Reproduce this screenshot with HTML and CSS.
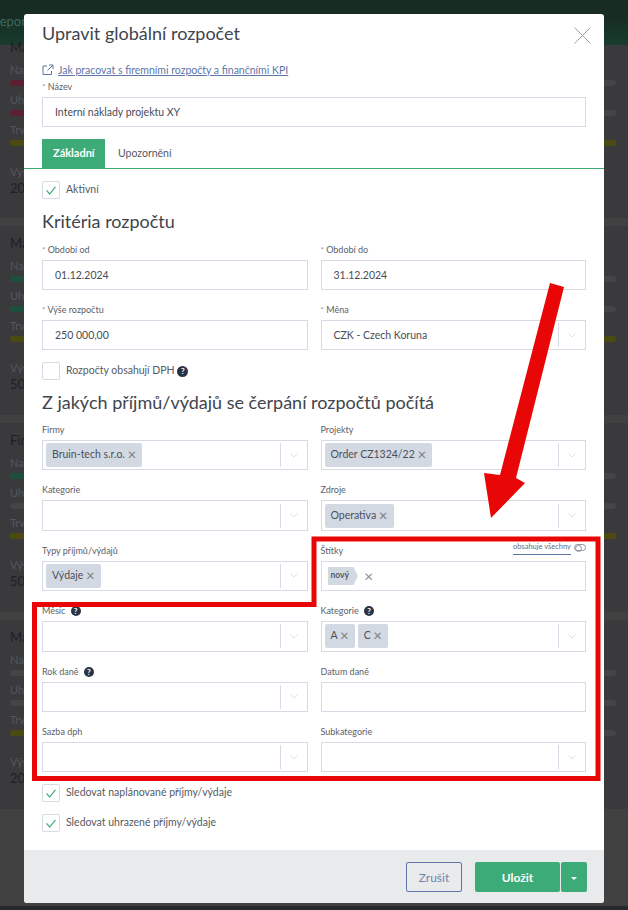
FILE: index.html
```html
<!DOCTYPE html>
<html lang="cs">
<head>
  <meta charset="UTF-8" />
  <meta name="viewport" content="width=device-width, initial-scale=1.0"/>
  <title>Upravit globální rozpočet</title>
  <link rel="stylesheet" href="styles.css">
</head>
<body>
  <!-- stranka za modalem -->
  <div class="page">
    <div class="topbar">Reporty</div>
    <div class="card first">
      <div class="card-title">Marže</div>
      <div class="metric">Naplánované</div>
      <div class="bar"><span class="fill red"></span></div>
      <div class="metric">Uhrazené</div>
      <div class="bar"><span class="fill red"></span></div>
      <div class="metric">Trvání</div>
      <div class="bar"><span class="fill olive full"></span></div>
      <div class="metric gap">Výše</div>
      <div class="amount">200 000</div>
    </div>
    <div class="card">
      <div class="card-title">Marže</div>
      <div class="metric">Naplánované</div>
      <div class="bar"><span class="fill green"></span></div>
      <div class="metric">Uhrazené</div>
      <div class="bar"><span class="fill green"></span></div>
      <div class="metric">Trvání</div>
      <div class="bar"><span class="fill olive full"></span></div>
      <div class="metric gap">Výše</div>
      <div class="amount">500 000</div>
    </div>
    <div class="card">
      <div class="card-title">Finance</div>
      <div class="metric">Naplánované</div>
      <div class="bar"><span class="fill green"></span></div>
      <div class="metric">Uhrazené</div>
      <div class="bar"></div>
      <div class="metric">Trvání</div>
      <div class="bar"><span class="fill olive full"></span></div>
      <div class="metric gap">Výše</div>
      <div class="amount">500 000</div>
    </div>
    <div class="card">
      <div class="card-title">Marže</div>
      <div class="metric">Naplánované</div>
      <div class="bar"></div>
      <div class="metric">Uhrazené</div>
      <div class="bar"></div>
      <div class="metric">Trvání</div>
      <div class="bar"><span class="fill olive"></span></div>
      <div class="metric gap">Výše</div>
      <div class="amount">200 000</div>
    </div>
  </div>

  <div class="modal">
    <div class="modal-body">
      <div class="modal-head">
        <h2 class="title">Upravit globální rozpočet</h2>
        <svg class="close" viewBox="0 0 17 17"><path d="M.5.5l16 16M16.500.5l-16 16"/></svg>
      </div>

      <a class="help-link" href="#">
        <svg viewBox="0 0 12 12"><path d="M9.500 7v3.500h-8.500v-8.500h4M7 1h4v4M11 1L5.500 6.500"/></svg>
        <span>Jak pracovat s firemními rozpočty a finančními KPI</span>
      </a>

      <div class="field">
        <label><i>*</i> Název</label>
        <div class="control"><span class="value">Interní náklady projektu XY</span></div>
      </div>

      <div class="tabs">
        <div class="tab active">Základní</div>
        <div class="tab">Upozornění</div>
      </div>

      <div class="check first-check">
        <span class="box"><svg viewBox="0 0 18 18"><path d="M4 9.500l3.500 4 6.500-8"/></svg></span>
        Aktivní
      </div>

      <h3 class="section first-section">Kritéria rozpočtu</h3>

      <div class="form-grid">
        <div class="field">
          <label><i>*</i> Období od</label>
          <div class="control"><span class="value">01.12.2024</span></div>
        </div>
        <div class="field">
          <label><i>*</i> Období do</label>
          <div class="control"><span class="value">31.12.2024</span></div>
        </div>
        <div class="field">
          <label><i>*</i> Výše rozpočtu</label>
          <div class="control"><span class="value">250 000,00</span></div>
        </div>
        <div class="field">
          <label><i>*</i> Měna</label>
          <div class="control select">
            <span class="value">CZK - Czech Koruna</span>
            <span class="arrow"><svg viewBox="0 0 8 5"><path d="M.5.500l3.500 3.500 3.500-3.500"/></svg></span>
          </div>
        </div>
      </div>

      <div class="check dph-check">
        <span class="box"></span>
        <span>Rozpočty obsahují DPH <span class="hint">?</span></span>
      </div>

      <h3 class="section second-section">Z jakých příjmů/výdajů se čerpání rozpočtů počítá</h3>

      <div class="form-grid tight">
        <div class="field">
          <label>Firmy</label>
          <div class="control select">
            <span class="chips"><span class="chip">Bruin-tech s.r.o. <b>×</b></span></span>
            <span class="arrow"><svg viewBox="0 0 8 5"><path d="M.5.500l3.500 3.500 3.500-3.500"/></svg></span>
          </div>
        </div>
        <div class="field">
          <label>Projekty</label>
          <div class="control select">
            <span class="chips"><span class="chip">Order CZ1324/22 <b>×</b></span></span>
            <span class="arrow"><svg viewBox="0 0 8 5"><path d="M.5.500l3.500 3.500 3.500-3.500"/></svg></span>
          </div>
        </div>
        <div class="field">
          <label>Kategorie</label>
          <div class="control select">
            <span class="chips"></span>
            <span class="arrow"><svg viewBox="0 0 8 5"><path d="M.5.500l3.500 3.500 3.500-3.500"/></svg></span>
          </div>
        </div>
        <div class="field">
          <label>Zdroje</label>
          <div class="control select">
            <span class="chips"><span class="chip">Operativa <b>×</b></span></span>
            <span class="arrow"><svg viewBox="0 0 8 5"><path d="M.5.500l3.500 3.500 3.500-3.500"/></svg></span>
          </div>
        </div>
        <div class="field">
          <label>Typy příjmů/výdajů</label>
          <div class="control select">
            <span class="chips"><span class="chip">Výdaje <b>×</b></span></span>
            <span class="arrow"><svg viewBox="0 0 8 5"><path d="M.5.500l3.500 3.500 3.500-3.500"/></svg></span>
          </div>
        </div>
        <div class="field">
          <label class="label-split">
            Štítky
            <span class="match-all"><u>obsahuje všechny</u><span class="toggle"></span></span>
          </label>
          <div class="control tags">
            <span class="tag">nový</span>
            <b class="tag-x">×</b>
          </div>
        </div>
        <div class="field">
          <label>Měsíc <span class="hint">?</span></label>
          <div class="control select">
            <span class="chips"></span>
            <span class="arrow"><svg viewBox="0 0 8 5"><path d="M.5.500l3.500 3.500 3.500-3.500"/></svg></span>
          </div>
        </div>
        <div class="field">
          <label>Kategorie <span class="hint">?</span></label>
          <div class="control select">
            <span class="chips">
              <span class="chip">A <b>×</b></span>
              <span class="chip">C <b>×</b></span>
            </span>
            <span class="arrow"><svg viewBox="0 0 8 5"><path d="M.5.500l3.500 3.500 3.500-3.500"/></svg></span>
          </div>
        </div>
        <div class="field">
          <label>Rok daně <span class="hint">?</span></label>
          <div class="control select">
            <span class="chips"></span>
            <span class="arrow"><svg viewBox="0 0 8 5"><path d="M.5.500l3.500 3.500 3.500-3.500"/></svg></span>
          </div>
        </div>
        <div class="field">
          <label>Datum daně</label>
          <div class="control"></div>
        </div>
        <div class="field">
          <label>Sazba dph</label>
          <div class="control select">
            <span class="chips"></span>
            <span class="arrow"><svg viewBox="0 0 8 5"><path d="M.5.500l3.500 3.500 3.500-3.500"/></svg></span>
          </div>
        </div>
        <div class="field">
          <label>Subkategorie</label>
          <div class="control select">
            <span class="chips"></span>
            <span class="arrow"><svg viewBox="0 0 8 5"><path d="M.5.500l3.500 3.500 3.500-3.500"/></svg></span>
          </div>
        </div>
      </div>

      <div class="check first-check">
        <span class="box"><svg viewBox="0 0 18 18"><path d="M4 9.500l3.500 4 6.500-8"/></svg></span>
        Sledovat naplánované příjmy/výdaje
      </div>
      <div class="check first-check">
        <span class="box"><svg viewBox="0 0 18 18"><path d="M4 9.500l3.500 4 6.500-8"/></svg></span>
        Sledovat uhrazené příjmy/výdaje
      </div>
    </div>

    <div class="modal-foot">
      <button class="btn-cancel">Zrušit</button>
      <div class="btn-group">
        <button class="btn-save">Uložit</button>
        <button class="btn-caret"><span></span></button>
      </div>
    </div>
  </div>

  <!-- cervene oznaceni pres screenshot -->
  <svg class="markup" viewBox="0 0 628 910">
    <path class="markup-frame" d="M314 539H598V778.500H34.500V604.500H314Z"/>
    <path class="markup-arrow" d="M550 283L564 287L516 478L525 483L491 518L484 473L500 475Z"/>
  </svg>
</body>
</html>
```

FILE: styles.css
```css
* {
  box-sizing: border-box;
}

body {
  margin: 0;
  height: 910px;
  overflow: hidden;
  position: relative;
  font-family: 'Lato', sans-serif;
  background: #26292c;
  color: #4a4e57;
}

/* stranka v pozadi */
.page {
  height: 906px;
  overflow: hidden;
  display: flex;
  flex-direction: column;
  gap: 8px;
  background: #414142;
}

.topbar {
  flex: none;
  height: 45px;
  margin-bottom: -8px;
  padding: 13px 0 0 0;
  margin-left: -8px;
  background: linear-gradient(#172d24 0, #172d24 40%, #183c2e 100%);
  color: #3b6a58;
  font-size: 13px;
  white-space: nowrap;
}

.card {
  flex: none;
  height: 189px;
  padding: 8px 12px 0 10px;
  background: #3a3a3c;
}

.card.first {
  height: 173px;
  padding-top: 0;
}

.card.first .card-title {
  margin-top: -7px;
}

.card-title {
  height: 18px;
  font-size: 13px;
  line-height: 18px;
  color: #1e2026;
}

.metric {
  margin-top: 8px;
  height: 12px;
  font-size: 11px;
  line-height: 12px;
  color: #55565c;
}

.metric.gap {
  margin-top: 20px;
}

.amount {
  margin-top: 3px;
  font-size: 13px;
  line-height: 14px;
  color: #1f2126;
}

.bar {
  height: 6px;
  margin-top: 4px;
  border-radius: 3px;
  background: #454547;
}

.fill {
  display: block;
  width: 60px;
  height: 6px;
  border-radius: 3px;
}

.fill.full {
  width: 100%;
}

.fill.red { background: #5c2030; }
.fill.green { background: #1e4f3c; }
.fill.olive { background: #4b4a10; }

/* modal */
.modal {
  position: absolute;
  top: 14px;
  left: 24px;
  width: 580px;
  height: 889px;
  display: flex;
  flex-direction: column;
  background: #fff;
  border-radius: 3px;
  overflow: hidden;
}

.modal-body {
  flex: 1;
  padding: 8px 18px 0;
}

.modal-head {
  display: flex;
  justify-content: space-between;
  height: 24px;
}

.title {
  margin: -1px 0 0;
  font-size: 18px;
  font-weight: 400;
  line-height: 24px;
  color: #41454c;
}

.close {
  width: 17px;
  height: 17px;
  margin: 5px -5px 0 0;
  fill: none;
  stroke: #9a9ea6;
  stroke-width: 1;
}

.help-link {
  display: flex;
  align-items: center;
  gap: 4px;
  height: 15px;
  margin-top: 16px;
  font-size: 10.500px;
  color: #5d76a6;
}

.help-link svg {
  width: 12px;
  height: 12px;
  fill: none;
  stroke: #5d76a6;
  stroke-width: 1;
}

.help-link span {
  text-decoration: underline;
}

label {
  display: block;
  height: 20px;
  font-size: 9px;
  line-height: 20px;
  color: #5d6068;
}

label i {
  font-style: normal;
  color: #999;
  font-size: 8px;
}

.label-split {
  display: flex;
  justify-content: space-between;
}

.match-all {
  display: flex;
  align-items: center;
  gap: 3px;
  height: 14px;
  font-size: 7.500px;
  color: #6a6e76;
}

.match-all u {
  text-decoration: none;
  border-bottom: 1px solid #5d76a6;
  line-height: 12px;
  padding-bottom: 1px;
}

.toggle {
  width: 12px;
  height: 7px;
  border: 1px solid #8d94a0;
  border-radius: 4px;
  position: relative;
}

.toggle::before {
  content: "";
  position: absolute;
  left: 0;
  top: 0;
  width: 5px;
  height: 5px;
  border: 1px solid #8d94a0;
  border-radius: 50%;
}

.control {
  display: flex;
  align-items: center;
  height: 30px;
  border: 1px solid #d6dae4;
  font-size: 10.500px;
  color: #484c55;
}

.tight .control {
  height: 30.400px;
}

.value {
  padding-left: 12px;
  padding-bottom: 1px;
}

.select .value,
.chips {
  flex: 1;
}

.chips {
  display: flex;
  gap: 3px;
  padding-left: 3px;
}

.chip {
  height: 24px;
  padding: 0 6px;
  line-height: 22px;
  border-radius: 2px;
  background: #d3d9e3;
  color: #4b505b;
  white-space: nowrap;
}

.chip b {
  font-weight: 400;
  font-size: 15px;
  line-height: 10px;
  vertical-align: -1.500px;
  color: #7c8088;
}

.arrow {
  flex: none;
  width: 27px;
  height: 24px;
  display: flex;
  align-items: center;
  justify-content: center;
  border-left: 1px solid #d6dae4;
}

.arrow svg {
  width: 8px;
  height: 5px;
  fill: none;
  stroke: #dfe1e6;
  stroke-width: 1;
}

.tags {
  padding-left: 6px;
}

.tag {
  height: 18px;
  padding: 0 9px 0 3px;
  font-size: 8.500px;
  font-weight: 700;
  line-height: 17px;
  color: #555a65;
  background: #d3d9e3;
  clip-path: polygon(0 0, 85% 0, 100% 50%, 85% 100%, 0 100%);
}

.tag-x {
  margin-left: 6px;
  font-weight: 400;
  font-size: 16px;
  color: #8d9097;
}

.tabs {
  display: flex;
  height: 30px;
  margin: 12px -18px 0;
  padding: 0 18px;
  border-bottom: 1px solid #3dab78;
  font-size: 10.500px;
  line-height: 28px;
}

.tab {
  padding: 0 13px;
  color: #55595f;
}

.tab.active {
  width: 63px;
  padding: 0 11px;
  background: #3dab78;
  color: #fff;
  font-size: 11px;
  font-weight: 700;
}

.check {
  display: flex;
  align-items: flex-start;
  gap: 6px;
  height: 18px;
  font-size: 10.500px;
  line-height: 16px;
  color: #565a62;
}

.first-check {
  margin-top: 12px;
}

.dph-check {
  margin-top: 12px;
}

.box {
  flex: none;
  width: 18px;
  height: 18px;
  border: 1px solid #d6dae4;
  border-radius: 2px;
}

.box svg {
  display: block;
  width: 16px;
  height: 16px;
  fill: none;
  stroke: #3dab78;
  stroke-width: 1.300;
}

.hint {
  display: inline-block;
  width: 10px;
  height: 10px;
  margin-left: 3px;
  border-radius: 50%;
  background: #2a3346;
  color: #fff;
  font-size: 8px;
  font-weight: 700;
  line-height: 10px;
  text-align: center;
}

.check .hint {
  width: 11px;
  height: 11px;
  line-height: 11px;
  margin-left: 0;
}

.section {
  margin: 0;
  font-size: 18px;
  font-weight: 400;
  line-height: 24px;
  color: #41454c;
}

.first-section {
  margin-top: 10px;
  margin-bottom: 7px;
}

.second-section {
  margin-top: 10px;
  margin-bottom: 6px;
}

.form-grid {
  display: grid;
  grid-template-columns: 1fr 1fr;
  column-gap: 13px;
  row-gap: 10px;
}

/* paticka */
.modal-foot {
  flex: none;
  height: 53px;
  display: flex;
  align-items: flex-start;
  justify-content: flex-end;
  gap: 13px;
  padding: 12px 17px 0 0;
  background: #e9eaec;
}

button {
  font-family: 'Lato', sans-serif;
  font-size: 12px;
  height: 30px;
  border-radius: 2px;
  cursor: pointer;
}

.btn-cancel {
  width: 56px;
  padding: 0;
  border: 1px solid #5d76a6;
  background: transparent;
  color: #6e85ad;
}

.btn-group {
  display: flex;
  gap: 1px;
}

.btn-save {
  width: 85px;
  border: none;
  background: #3dab78;
  color: #fff;
  font-weight: 700;
}

.btn-caret {
  width: 26px;
  padding: 0;
  border: none;
  background: #3dab78;
}

.btn-caret span {
  display: block;
  width: 0;
  margin: 2px auto 0;
  border-style: solid;
  border-width: 3px 3px 0;
  border-color: #fff transparent transparent;
}

/* anotace */
.markup {
  position: absolute;
  top: 0;
  left: 0;
  width: 628px;
  height: 910px;
  pointer-events: none;
}

.markup-frame {
  fill: none;
  stroke: #e90606;
  stroke-width: 5;
}

.markup-arrow {
  fill: #e90606;
}
```
